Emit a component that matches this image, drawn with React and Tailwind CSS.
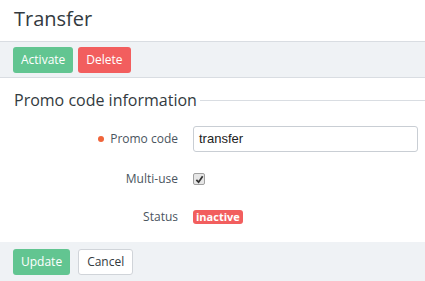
import React from 'react';

function Btn({ children, className }) {
    return (
        <button
            type="button"
            className={"h-[26px] px-[8px] rounded-[3px] text-[12px] leading-none " + className}
        >
            {children}
        </button>
    );
}

function Row({ label, required, children, className }) {
    return (
        <div className={"flex items-center " + className}>
            <div className="w-[193px] pr-[15px] flex items-center justify-end gap-[6px] text-[12px] text-[#4a5560]">
                {required && <span className="w-[6px] h-[6px] rounded-full bg-[#f0643a]" />}
                <span>{label}</span>
            </div>
            {children}
        </div>
    );
}

export default function App() {
    return (
        <div className="w-[425px] h-[281px] bg-white overflow-hidden" style={{ fontFamily: '"Open Sans", sans-serif' }}>
            <h1 className="h-[41px] pl-[14px] pt-[3px] text-[20px] text-[#333a40] leading-[32px]">Transfer</h1>

            <div className="h-[37px] bg-[#eff2f5] border-y border-[#d9dde2] flex items-center gap-[5px] pl-[13px]">
                <Btn className="bg-[#62c591] text-white">Activate</Btn>
                <Btn className="bg-[#f25e5e] text-white">Delete</Btn>
            </div>

            <div className="flex items-center pl-[14px] mt-[11px]">
                <span className="text-[16px] text-[#333a40] leading-[22px]">Promo code information</span>
                <div className="flex-1 h-px bg-[#d9dde2] ml-[3px]" />
            </div>

            <Row label="Promo code" required className="mt-[15px] h-[26px]">
                <div className="w-[225px] h-[26px] border border-[#c9ced4] rounded-[3px] px-[5px] flex items-center text-[13px] text-[#222]" style={{ fontFamily: '"Liberation Sans", sans-serif' }}>
                    transfer
                </div>
            </Row>

            <Row label="Multi-use" className="mt-[15px] h-[24px]">
                <div className="w-[12px] h-[12px] rounded-[2px] border border-[#a0a0a0] bg-[#e6e6e6] flex items-center justify-center">
                    <svg viewBox="0 0 10 10" className="w-[9px] h-[9px]">
                        <path d="M1.5 5.5 L4 8 L8.5 1.5" fill="none" stroke="#333" strokeWidth="2" />
                    </svg>
                </div>
            </Row>

            <Row label="Status" className="mt-[14px] h-[24px]">
                <span className="h-[14px] px-[3px] rounded-[3px] bg-[#f25e5e] text-white text-[11px] font-bold leading-[14px]">inactive</span>
            </Row>

            <div className="mt-[13px] h-[40px] bg-[#eff2f5] flex items-center gap-[8px] pl-[13px]">
                <Btn className="bg-[#62c591] text-white">Update</Btn>
                <Btn className="bg-white border border-[#d0d4d9] text-[#333a40]">Cancel</Btn>
            </div>
        </div>
    );
}
